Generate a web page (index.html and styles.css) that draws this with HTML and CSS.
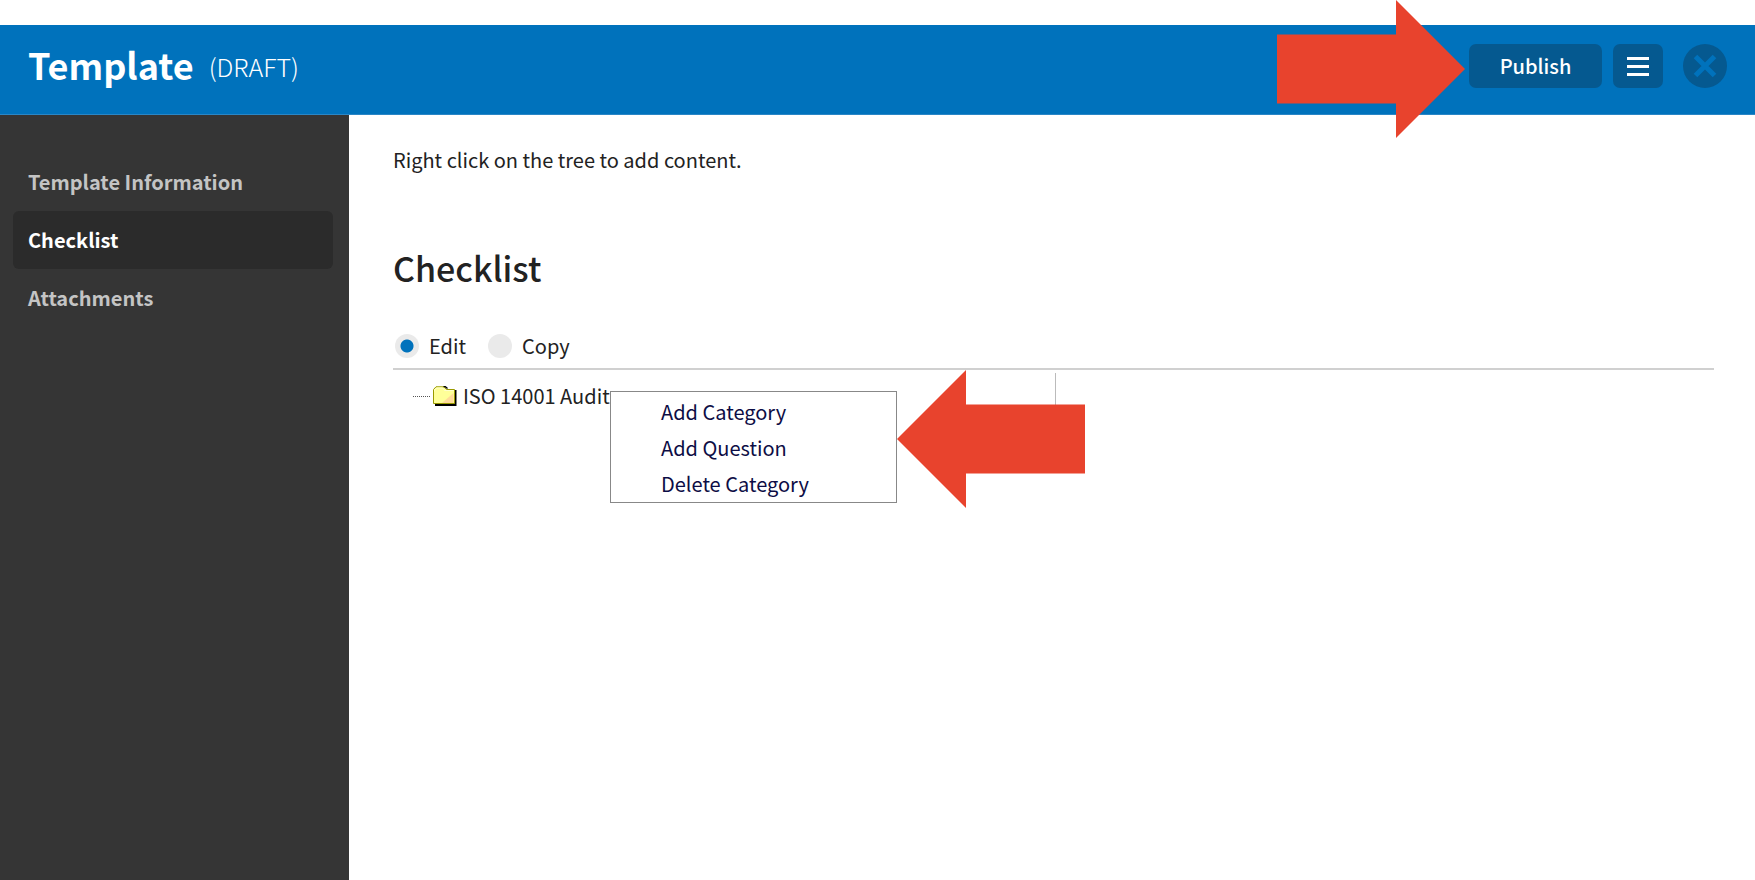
FILE: index.html
```html
<!DOCTYPE html>
<html lang="en">

<head>
    <meta charset="UTF-8">
    <meta name="viewport" content="width=device-width, initial-scale=1.0">
    <title>Template</title>
    <link rel="stylesheet" href="styles.css">
</head>

<body>
    <header class="topbar">
        <h1 class="title">Template</h1>
        <span class="status">(DRAFT)</span>
        <div class="actions">
            <button class="btn publish" type="button">Publish</button>
            <button class="btn menu-btn" type="button" aria-label="Menu">
                <svg width="22" height="20" viewBox="0 0 22 20">
                    <path d="M0 2.5h22M0 10.500h22M0 18.500h22" stroke="#fff" stroke-width="3" />
                </svg>
            </button>
            <button class="btn close-btn" type="button" aria-label="Close">
                <svg width="24" height="24" viewBox="0 0 24 24">
                    <path d="M2.500 2.500l19 19M21.500 2.500l-19 19" stroke="#0072bc" stroke-width="5" />
                </svg>
            </button>
            <svg class="arrow arrow-publish" width="188" height="138" viewBox="0 0 188 138">
                <path d="M0 34.500h119V0l69 69-69 69v-34.500H0z" />
            </svg>
        </div>
    </header>

    <div class="page">
        <nav class="sidebar">
            <a href="#">Template Information</a>
            <a href="#" class="active">Checklist</a>
            <a href="#">Attachments</a>
        </nav>

        <main class="content">
            <p class="hint">Right click on the tree to add content.</p>
            <h2>Checklist</h2>

            <div class="modes">
                <label><input type="radio" name="mode" checked>Edit</label>
                <label><input type="radio" name="mode">Copy</label>
            </div>

            <div class="panes">
                <div class="tree">
                    <div class="node">
                        <span class="dots"></span>
                        <svg class="folder" width="24" height="20" viewBox="0 0 24 20">
                            <path d="M2 4h21.500v16H2z" fill="#000" />
                            <path d="M.5 17.500V3.500L3 .800h8L13.500 3.500h8v14z" fill="#ffff99" stroke="#999900" />
                            <path d="M20.500 7v10H9z" fill="#ffcc99" opacity=".7" />
                            <path d="M1.500 5.500V4L3.500 2h6l2 2.500h9" fill="none" stroke="#ffffcc" />
                            <path d="M10.500 .500H12L14.500 2.500" fill="none" stroke="#000" stroke-width="1.500" />
                        </svg>
                        <span class="node-name">ISO 14001 Audit</span>

                        <!-- Right click menu -->
                        <div class="context-menu">
                            <button type="button">Add Category</button>
                            <button type="button">Add Question</button>
                            <button type="button">Delete Category</button>
                            <svg class="arrow arrow-menu" width="188" height="138" viewBox="0 0 188 138">
                                <path d="M188 34.500H69V0L0 69l69 69v-34.500h119z" />
                            </svg>
                        </div>
                    </div>
                </div>
                <div class="detail"></div>
            </div>
        </main>
    </div>
</body>

</html>
```
FILE: styles.css
```css
* {
    box-sizing: border-box;
}

body {
    margin: 0;
    padding-top: 25px;
    min-height: 100vh;
    display: flex;
    flex-direction: column;
    font-family: "Noto Sans CJK SC", "Open Sans", sans-serif;
    font-size: 20px;
    line-height: 30px;
    color: #222;
    background: #fff;
}

button,
input {
    font: inherit;
    margin: 0;
}

/* Header */
.topbar {
    height: 90px;
    padding: 0 28px;
    display: flex;
    align-items: center;
    background: #0072bc;
    border-bottom: 1px solid #2a86c6;
    color: #fff;
}

.title {
    margin: 0 15px 12px 0;
    font-size: 36px;
    font-weight: 700;
}

.status {
    margin-bottom: 8px;
    font-size: 25px;
    font-weight: 300;
}

.actions {
    position: relative;
    margin: 0 0 7px auto;
    display: flex;
    gap: 11px;
}

.btn {
    height: 44px;
    padding: 0;
    display: flex;
    align-items: center;
    justify-content: center;
    background: #055990;
    color: #fff;
    border: none;
    border-radius: 7px;
    cursor: pointer;
}

.publish {
    width: 133px;
    font-weight: 500;
}

.menu-btn {
    width: 50px;
}

.close-btn {
    width: 44px;
    margin-left: 9px;
    border-radius: 50%;
}

.arrow {
    position: absolute;
    fill: #e8432d;
}

.arrow-publish {
    top: -44px;
    right: 262px;
}

/* Page */
.page {
    flex: 1;
    display: flex;
}

.sidebar {
    width: 349px;
    padding: 38px 16px 0 13px;
    background: #353535;
}

.sidebar a {
    display: block;
    padding: 14px 15px;
    border-radius: 6px;
    color: #c4c4c4;
    font-weight: 700;
    text-decoration: none;
}

.sidebar a.active {
    background: #2b2b2b;
    color: #fff;
}

.content {
    flex: 1;
    padding: 30px 41px 0 44px;
}

.hint {
    margin: 0;
}

h2 {
    margin: 68px 0 0;
    font-size: 34px;
    line-height: 50px;
    font-weight: 500;
}

/* Edit / Copy */
.modes {
    display: flex;
    gap: 22px;
    margin-top: 38px;
    padding: 0 2px 7px;
    border-bottom: 2px solid #d0d0d0;
}

.modes label {
    display: flex;
    align-items: center;
    gap: 10px;
}

.modes input {
    appearance: none;
    width: 24px;
    height: 24px;
    border-radius: 50%;
    background: #eaeaea;
}

.modes input:checked {
    background: radial-gradient(circle, #0072bc 6px, #eaeaea 7px);
}

/* Tree */
.panes {
    display: flex;
    margin-top: 3px;
}

.tree {
    width: 663px;
    height: 94px;
    padding: 8px 20px;
    border-right: 1px solid #bbb;
}

.node {
    position: relative;
    display: flex;
    align-items: center;
}

.dots {
    width: 17px;
    border-top: 1px dotted #555;
}

.folder {
    margin: 0 6px 0 3px;
}

.context-menu {
    position: absolute;
    top: 10px;
    left: 197px;
    width: 287px;
    padding: 2px 0 0;
    background: #fff;
    border: 1px solid #888;
}

.context-menu button {
    display: block;
    width: 100%;
    height: 36px;
    padding: 0 50px;
    background: none;
    border: none;
    color: #0d0d45;
    text-align: left;
    cursor: pointer;
}

.arrow-menu {
    top: -22px;
    left: 286px;
}
```
